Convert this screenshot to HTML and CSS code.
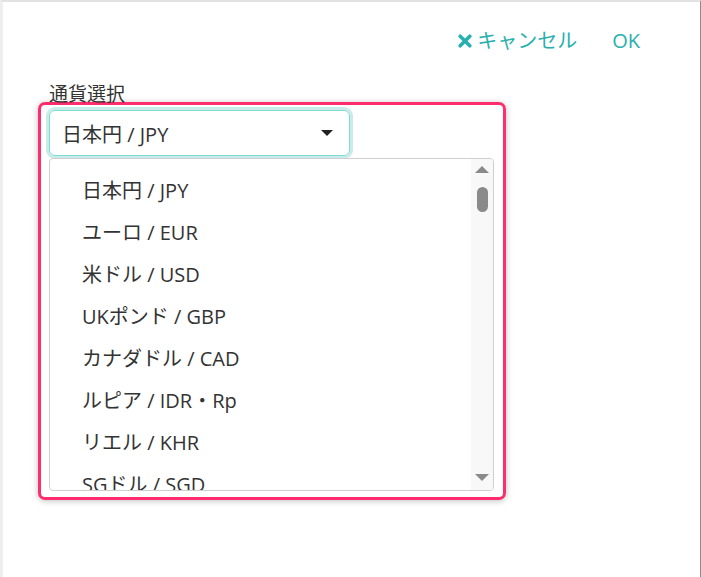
FILE: index.html
```html
<!DOCTYPE html>
<html lang="ja">
<head>
<meta charset="utf-8">
<link rel="stylesheet" href="styles.css">
</head>
<body>
<div class="page">
  <header class="actions">
    <span class="cancel">
      <svg class="x-icon" width="14" height="14" viewBox="0 0 14 14"><path d="M2.2 2.2 L11.8 11.8 M11.8 2.2 L2.2 11.8" stroke="#27b0ae" stroke-width="3.6" stroke-linecap="round"/></svg>
      キャンセル
    </span>
    <span class="ok">OK</span>
  </header>
  <main class="content">
    <div class="label">通貨選択</div>
    <div class="highlight">
      <div class="select">
        <span>日本円 / JPY</span>
        <span class="caret"></span>
      </div>
      <div class="listbox">
        <ul class="items">
          <li>日本円 / JPY</li>
          <li>ユーロ / EUR</li>
          <li>米ドル / USD</li>
          <li>UKポンド / GBP</li>
          <li>カナダドル / CAD</li>
          <li>ルピア / IDR・Rp</li>
          <li>リエル / KHR</li>
          <li>SGドル / SGD</li>
        </ul>
        <div class="scrollbar">
          <span class="arrow-up"></span>
          <span class="thumb"></span>
          <span class="spacer"></span>
          <span class="arrow-down"></span>
        </div>
      </div>
    </div>
  </main>
</div>
</body>
</html>
```

FILE: styles.css
```css
html, body {
  margin: 0;
  padding: 0;
  background: #fff;
}
body {
  font-family: "Open Sans", "Noto Sans CJK JP", sans-serif;
  color: #333;
}
.page {
  width: 701px;
  height: 577px;
  box-sizing: border-box;
  border-top: 2px solid #e2e2e2;
  border-left: 3px solid #eeeeee;
  border-right: 1px solid #8c8c8c;
  overflow: hidden;
}
.actions {
  display: flex;
  justify-content: flex-end;
  align-items: center;
  gap: 35px;
  padding: 26px 60px 0 0;
  height: 26px;
  line-height: 26px;
  font-size: 20px;
  color: #27b0ae;
}
.cancel {
  display: flex;
  align-items: center;
  gap: 5px;
}
.x-icon {
  display: block;
}
.content {
  padding: 29px 0 0 35px;
}
.label {
  padding-left: 11px;
  font-size: 19px;
  line-height: 22px;
  height: 22px;
}
.highlight {
  width: 468px;
  height: 398px;
  box-sizing: border-box;
  margin-top: -3px;
  border: 3px solid #ff2d6d;
  border-radius: 7px;
  padding: 5px 8px 6px;
  box-shadow: 0 1px 6px rgba(0, 0, 0, 0.25);
  display: flex;
  flex-direction: column;
  gap: 2px;
  background: #fff;
}
.select {
  width: 301px;
  height: 46px;
  box-sizing: border-box;
  border: 1px solid #7fdbd6;
  border-radius: 6px;
  box-shadow: 0 0 0 3px rgba(120, 205, 200, 0.4);
  display: flex;
  align-items: center;
  justify-content: space-between;
  padding: 0 16px 0 12px;
  font-size: 20px;
}
.caret {
  width: 0;
  height: 0;
  border-left: 6px solid transparent;
  border-right: 6px solid transparent;
  border-top: 6px solid #222;
}
.listbox {
  width: 445px;
  flex: 1;
  box-sizing: border-box;
  border: 1px solid #cfcfcf;
  border-radius: 4px;
  display: flex;
  overflow: hidden;
}
.items {
  list-style: none;
  margin: 0;
  padding: 11px 0 0 32px;
  flex: 1;
  font-size: 20px;
  overflow: hidden;
}
.items li {
  height: 42px;
  line-height: 42px;
  white-space: nowrap;
}
.scrollbar {
  width: 22px;
  background: #f8f8f8;
  display: flex;
  flex-direction: column;
  align-items: center;
  padding: 7px 0 9px;
  box-sizing: border-box;
}
.arrow-up {
  width: 0;
  height: 0;
  border-left: 7px solid transparent;
  border-right: 7px solid transparent;
  border-bottom: 7px solid #8a8a8a;
}
.thumb {
  margin-top: 14px;
  width: 11px;
  height: 25px;
  border-radius: 6px;
  background: #8a8a8a;
}
.spacer {
  flex: 1;
}
.arrow-down {
  width: 0;
  height: 0;
  border-left: 7px solid transparent;
  border-right: 7px solid transparent;
  border-top: 7px solid #8a8a8a;
}
```
